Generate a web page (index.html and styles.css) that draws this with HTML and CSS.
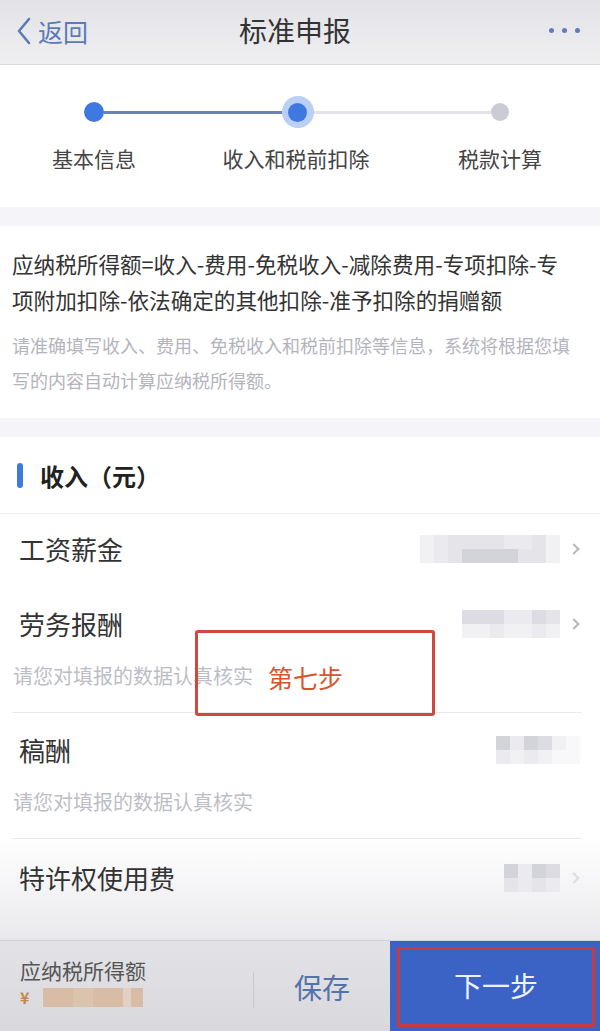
FILE: index.html
```html
<!DOCTYPE html>
<html lang="zh-CN">
<head>
<meta charset="utf-8">
<title>标准申报</title>
<link rel="stylesheet" href="styles.css">
</head>
<body>
<header class="topbar">
  <div class="back">
    <svg class="back-icon" width="16" height="28" viewBox="0 0 16 28"><path d="M13 2 L3 14 L13 26" fill="none" stroke="#5b7bb6" stroke-width="2.6" stroke-linecap="round" stroke-linejoin="round"/></svg>
    <span class="back-text">返回</span>
  </div>
  <h1 class="title">标准申报</h1>
  <div class="more"><i></i><i></i><i></i></div>
</header>

<main class="content">
  <section class="steps">
    <div class="track">
      <span class="dot dot-done"></span>
      <span class="line line-done"></span>
      <span class="halo"><span class="dot dot-done"></span></span>
      <span class="line line-todo"></span>
      <span class="dot dot-todo"></span>
    </div>
    <div class="labels">
      <span>基本信息</span>
      <span>收入和税前扣除</span>
      <span>税款计算</span>
    </div>
  </section>

  <section class="info">
    <p class="formula">应纳税所得额=收入-费用-免税收入-减除费用-专项扣除-专<br>项附加扣除-依法确定的其他扣除-准予扣除的捐赠额</p>
    <p class="hint">请准确填写收入、费用、免税收入和税前扣除等信息，系统将根据您填<br>写的内容自动计算应纳税所得额。</p>
  </section>

  <section class="income">
    <div class="sec-head"><span class="bar"></span><span class="sec-title">收入（元）</span></div>

    <div class="item item-first">
      <div class="row">
        <span class="name">工资薪金</span>
        <span class="mosaic cols10">
          <i class="g1"></i><i class="g2"></i><i class="g3"></i><i class="g3"></i><i class="g3"></i><i class="g3"></i><i class="g2"></i><i class="g2"></i><i class="g3"></i><i class="g1"></i>
          <i class="g1"></i><i class="g2"></i><i class="g3"></i><i class="g5"></i><i class="g5"></i><i class="g5"></i><i class="g5"></i><i class="g3"></i><i class="g3"></i><i class="g1"></i>
        </span>
        <span class="chev"></span>
      </div>
    </div>

    <div class="item">
      <div class="row">
        <span class="name">劳务报酬</span>
        <span class="mosaic cols7">
          <i class="g4"></i><i class="g4"></i><i class="g4"></i><i class="g2"></i><i class="g2"></i><i class="g4"></i><i class="g3"></i>
          <i class="g1"></i><i class="g1"></i><i class="g2"></i><i class="g1"></i><i class="g1"></i><i class="g2"></i><i class="g1"></i>
        </span>
        <span class="chev"></span>
      </div>
      <p class="note">请您对填报的数据认真核实</p>
    </div>

    <div class="item">
      <div class="row">
        <span class="name">稿酬</span>
        <span class="mosaic cols6">
          <i class="g5"></i><i class="g2"></i><i class="g5"></i><i class="g4"></i><i class="g1"></i><i class="g0"></i>
          <i class="g2"></i><i class="g1"></i><i class="g2"></i><i class="g1"></i><i class="g0"></i><i class="g0"></i>
        </span>
      </div>
      <p class="note">请您对填报的数据认真核实</p>
    </div>

    <div class="item item-last">
      <div class="row">
        <span class="name">特许权使用费</span>
        <span class="mosaic cols4">
          <i class="g5"></i><i class="g2"></i><i class="g5"></i><i class="g4"></i>
          <i class="g3"></i><i class="g2"></i><i class="g3"></i><i class="g2"></i>
        </span>
        <span class="chev chev-faint"></span>
      </div>
    </div>
  </section>

  <div class="callout"><span>第七步</span></div>
</main>

<footer class="bottombar">
  <div class="total">
    <div class="total-label">应纳税所得额</div>
    <div class="total-value"><span class="yen">¥</span><span class="amount"><i></i><i></i><i></i><i></i><i></i></span></div>
  </div>
  <div class="divider"></div>
  <div class="save">保存</div>
  <div class="next"><div class="next-box">下一步</div></div>
</footer>
</body>
</html>
```

FILE: styles.css
```css
* { box-sizing: border-box; }
html, body { margin: 0; padding: 0; }
body {
  width: 600px;
  height: 1031px;
  overflow: hidden;
  display: flex;
  flex-direction: column;
  background: #f4f4f9;
  font-family: "Noto Sans CJK SC", "Noto Sans", sans-serif;
  color: #333;
}

/* header */
.topbar {
  height: 65px;
  flex: none;
  display: grid;
  grid-template-columns: 1fr auto 1fr;
  align-items: center;
  padding: 0 20px 0 16px;
  background: linear-gradient(#e3e3e7, #efeff2);
  border-bottom: 1px solid #d8d8dd;
}
.back { display: flex; align-items: center; gap: 6px; margin-top: -2px; }
.back-icon { display: block; }
.back-text { font-size: 25px; color: #5b7bb6; line-height: 30px; }
.title {
  margin: 0;
  font-size: 28px;
  font-weight: 400;
  color: #333;
  line-height: 36px;
  margin-top: -4px;
  margin-right: 6px;
}
.more { justify-self: end; display: flex; gap: 8px; margin-top: -4px; }
.more i { width: 5px; height: 5px; border-radius: 50%; background: #5f7eb8; display: block; }

/* content */
.content {
  flex: 1;
  overflow: hidden;
  position: relative;
  display: flex;
  flex-direction: column;
}

.steps { background: #fff; padding: 31px 0 34px; flex: none; }
.track { display: flex; align-items: center; padding: 0 91px 0 84px; height: 32px; }
.dot { display: block; width: 20px; height: 20px; border-radius: 50%; flex: none; }
.dot-done { background: #3f78e0; }
.dot-todo { width: 18px; height: 18px; background: #cbcbd6; }
.halo { width: 32px; height: 32px; border-radius: 50%; background: #b9cff4; display: flex; align-items: center; justify-content: center; flex: none; }
.halo .dot { width: 19px; height: 19px; }
.line { flex: 1; height: 3px; }
.line-done { background: #6c84b4; }
.line-todo { background: #e3e3ea; }
.labels {
  display: grid;
  grid-template-columns: 188px 216px 192px;
  margin-top: 15px;
  font-size: 21px;
  line-height: 30px;
  color: #444;
  text-align: center;
}

.info { background: #fff; margin-top: 19px; padding: 20px 12px 20px; flex: none; }
.formula { margin: 0; font-size: 21.6px; line-height: 36px; color: #333; white-space: nowrap; }
.hint { margin: 10px 0 0; font-size: 18px; line-height: 35px; color: #b4b4bd; white-space: nowrap; }

.income {
  margin-top: 19px;
  flex: 1;
  background: linear-gradient(#fff 0, #fff 400px, #e9e9ed 100%);
}
.sec-head {
  height: 77px;
  display: flex;
  align-items: center;
  padding-left: 17px;
  border-bottom: 1px solid #efeff3;
}
.bar { width: 6px; height: 25px; border-radius: 3px; background: #3f7ae0; margin-right: 17px; }
.sec-title { font-size: 24px; font-weight: 700; color: #222; line-height: 30px; margin-top: 1px; }

.item {
  margin: 0 18px 0 12px;
  padding: 22px 0 21px;
  border-bottom: 1px solid #e9e9ee;
}
.item-first { border-bottom: none; padding: 20px 0 23px; }
.item-last { border-bottom: none; padding-top: 24px; }
.row { display: flex; align-items: center; height: 30px; }
.name { flex: 1; font-size: 26px; line-height: 30px; color: #333; padding-left: 7px; }
.note { margin: 22px 0 0; font-size: 20px; line-height: 30px; color: #bdbdc6; padding-left: 1px; }

.mosaic { display: grid; grid-auto-rows: 14px; height: 28px; }
.cols10 { grid-template-columns: repeat(10, 14px); }
.cols7 { grid-template-columns: repeat(7, 14px); }
.cols6 { grid-template-columns: repeat(6, 14px); margin-right: 2px; }
.cols4 { grid-template-columns: repeat(4, 14px); }
.mosaic i { display: block; }
.g0 { background: #f8f8fa; }
.g1 { background: #f1f1f4; }
.g2 { background: #ebebef; }
.g3 { background: #e4e4e9; }
.g4 { background: #dcdce2; }
.g5 { background: #d3d3da; }

.chev {
  width: 8px; height: 8px;
  border-top: 2px solid #b7b7bf;
  border-right: 2px solid #b7b7bf;
  transform: rotate(45deg);
  margin: 0 4px 0 10px;
}
.chev-faint { border-color: #dcdce2; }
.cols4 + .chev { margin-left: 10px; }
.item-last .row { padding-right: 0; }

/* red annotation overlay */
.callout {
  position: absolute;
  left: 195px;
  top: 565px;
  width: 240px;
  height: 86px;
  border: 3px solid #cf4a3c;
  border-radius: 3px;
  display: flex;
  align-items: center;
  padding: 8px 0 0 70px;
}
.callout span { font-size: 25px; color: #d9532c; line-height: 30px; }

/* bottom bar */
.bottombar {
  height: 91px;
  flex: none;
  display: grid;
  grid-template-columns: 253px 1px 136px 210px;
  align-items: center;
  background: linear-gradient(#e3e3e7, #d8d8dd);
  border-top: 1px solid #d2d2d8;
}
.total { padding: 14px 0 0 20px; align-self: stretch; }
.total-label { font-size: 21px; line-height: 30px; color: #555; }
.total-value { display: flex; align-items: center; gap: 14px; margin-top: 2px; }
.yen { font-size: 16px; color: #c4874a; font-weight: 700; line-height: 20px; }
.amount { display: grid; grid-template-columns: 30px 20px 30px 8px 12px; height: 19px; }
.amount i { display: block; background: #d8bca6; }
.amount i:nth-child(2) { background: #dcc3ae; }
.amount i:nth-child(4) { background: #e2d0c2; }
.divider { width: 1px; height: 36px; background: #c8c8ce; margin-top: 8px; }
.save { text-align: center; font-size: 28px; color: #5573aa; line-height: 34px; margin-top: 2px; }
.next {
  align-self: stretch;
  background: #3b63c6;
  padding: 6px 5px 4px 7px;
}
.next-box {
  height: 100%;
  border: 3px solid #c93a3e;
  display: flex;
  align-items: center;
  justify-content: center;
  font-size: 28px;
  color: #eef1f8;
  padding-bottom: 4px;
}
```
